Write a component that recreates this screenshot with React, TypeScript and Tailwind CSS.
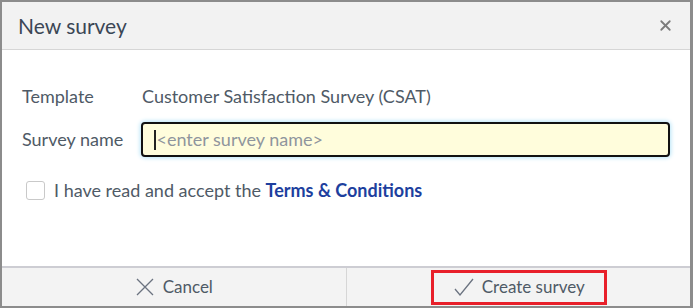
import { X } from 'lucide-react'

const font = { fontFamily: 'Lato, "Noto Sans", sans-serif' }

export default function App() {
  return (
    <div className="h-[308px] w-[693px] bg-[#8c8c8c] pl-[2px] pr-[3px] pt-[2px] pb-[2px]" style={font}>
      <div className="flex h-full flex-col bg-white">
        <div className="flex h-[48px] shrink-0 items-center justify-between border-b border-[#d6d6d6] bg-[#f2f2f2] pl-[16px] pr-[16px]">
          <h1 className="text-[21px] text-[#3b4655]">New survey</h1>
          <X size={17} strokeWidth={2.5} className="text-[#7c7c7c]" />
        </div>

        <div className="flex-1 pl-[20px] pr-[20px] pt-[35px]">
          <div className="flex h-[22px] items-center text-[18px] text-[#4f5a66]">
            <span className="w-[120px]">Template</span>
            <span>Customer Satisfaction Survey (CSAT)</span>
          </div>
          <div className="mt-[15px] flex items-center text-[18px] text-[#4f5a66]">
            <span className="w-[119px]">Survey name</span>
            <div className="flex h-[35px] flex-1 items-center rounded-[4px] border-2 border-[#111] bg-[#fffddc] pl-[11px] shadow-[0_0_4px_1px_#b7e4f7]">
              <span className="mr-[1px] h-[20px] w-[1.5px] bg-[#222]" />
              <span className="text-[#8f959d]">&lt;enter survey name&gt;</span>
            </div>
          </div>
          <div className="mt-[20px] flex items-center pl-[4px] text-[18px] text-[#4f5a66]">
            <span className="h-[19px] w-[19px] shrink-0 rounded-[3px] border border-[#c9c9c9] bg-white" />
            <span className="ml-[9px]">
              I have read and accept the <span className="font-bold text-[#1d3f9e]">Terms &amp; Conditions</span>
            </span>
          </div>
        </div>

        <div className="flex h-[40px] shrink-0 border-t-2 border-[#cdcdd3] bg-[#f3f3f3] text-[17px] text-[#4f5a66]">
          <div className="flex flex-1 items-center justify-center gap-[8px] border-r border-[#d6d6d6]">
            <svg width="20" height="20" viewBox="0 0 20 20" fill="none" stroke="#6b7380" strokeWidth="1.3">
              <path d="M2 2 L18 18 M18 2 L2 18" />
            </svg>
            <span>Cancel</span>
          </div>
          <div className="flex flex-1 items-center justify-center">
            <div className="ml-[2px] flex h-[35px] w-[176px] items-center justify-center gap-[8px] border-[3px] border-[#e8202a]">
              <svg width="20" height="18" viewBox="0 0 20 18" fill="none" stroke="#6b7380" strokeWidth="1.3">
                <path d="M1 11 L6 17 L19 1" />
              </svg>
              <span>Create survey</span>
            </div>
          </div>
        </div>
      </div>
    </div>
  )
}
